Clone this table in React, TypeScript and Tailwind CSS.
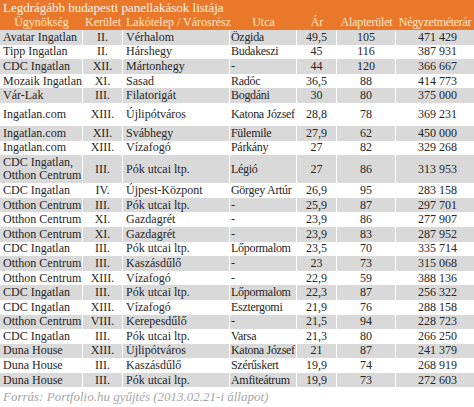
type Row = {
    agency: string[];
    district: string;
    estate: string;
    street: string;
    price: string;
    area: string;
    sqm: string;
    h?: string;
};

const rows: Row[] = [
    { agency: ["Avatar Ingatlan"], district: "II.", estate: "Vérhalom", street: "Özgida", price: "49,5", area: "105", sqm: "471 429" },
    { agency: ["Tipp Ingatlan"], district: "II.", estate: "Hárshegy", street: "Budakeszi", price: "45", area: "116", sqm: "387 931" },
    { agency: ["CDC Ingatlan"], district: "XII.", estate: "Mártonhegy", street: "-", price: "44", area: "120", sqm: "366 667" },
    { agency: ["Mozaik Ingatlan"], district: "XI.", estate: "Sasad", street: "Radóc", price: "36,5", area: "88", sqm: "414 773" },
    { agency: ["Vár-Lak"], district: "III.", estate: "Filatorigát", street: "Bogdáni", price: "30", area: "80", sqm: "375 000" },
    { agency: ["Ingatlan.com"], district: "XIII.", estate: "Újlipótváros", street: "Katona József", price: "28,8", area: "78", sqm: "369 231", h: "h-[23px]" },
    { agency: ["Ingatlan.com"], district: "XII.", estate: "Svábhegy", street: "Fülemile", price: "27,9", area: "62", sqm: "450 000" },
    { agency: ["Ingatlan.com"], district: "XIII.", estate: "Vízafogó", street: "Párkány", price: "27", area: "82", sqm: "329 268" },
    { agency: ["CDC Ingatlan,", "Otthon Centrum"], district: "III.", estate: "Pók utcai ltp.", street: "Légió", price: "27", area: "86", sqm: "313 953", h: "h-[28px]" },
    { agency: ["CDC Ingatlan"], district: "IV.", estate: "Újpest-Központ", street: "Görgey Artúr", price: "26,9", area: "95", sqm: "283 158" },
    { agency: ["Otthon Centrum"], district: "III.", estate: "Pók utcai ltp.", street: "-", price: "25,9", area: "87", sqm: "297 701" },
    { agency: ["Otthon Centrum"], district: "XI.", estate: "Gazdagrét", street: "-", price: "23,9", area: "86", sqm: "277 907" },
    { agency: ["Otthon Centrum"], district: "XI.", estate: "Gazdagrét", street: "-", price: "23,9", area: "83", sqm: "287 952" },
    { agency: ["CDC Ingatlan"], district: "III.", estate: "Pók utcai ltp.", street: "Lőpormalom", price: "23,5", area: "70", sqm: "335 714" },
    { agency: ["Otthon Centrum"], district: "III.", estate: "Kaszásdűlő", street: "-", price: "23", area: "73", sqm: "315 068" },
    { agency: ["Otthon Centrum"], district: "XIII.", estate: "Vízafogó", street: "-", price: "22,9", area: "59", sqm: "388 136" },
    { agency: ["CDC Ingatlan"], district: "III.", estate: "Pók utcai ltp.", street: "Lőpormalom", price: "22,3", area: "87", sqm: "256 322" },
    { agency: ["CDC Ingatlan"], district: "XIII.", estate: "Vízafogó", street: "Esztergomi", price: "21,9", area: "76", sqm: "288 158" },
    { agency: ["Otthon Centrum"], district: "VIII.", estate: "Kerepesdűlő", street: "-", price: "21,5", area: "94", sqm: "228 723" },
    { agency: ["CDC Ingatlan"], district: "III.", estate: "Pók utcai ltp.", street: "Varsa", price: "21,3", area: "80", sqm: "266 250" },
    { agency: ["Duna House"], district: "XIII.", estate: "Újlipótváros", street: "Katona József", price: "21", area: "87", sqm: "241 379" },
    { agency: ["Duna House"], district: "III.", estate: "Kaszásdűlő", street: "Szérűskert", price: "19,9", area: "74", sqm: "268 919" },
    { agency: ["Duna House"], district: "III.", estate: "Pók utcai ltp.", street: "Amfiteátrum", price: "19,9", area: "73", sqm: "272 603" },
];

const cols = "grid grid-cols-[83px_40px_107px_67px_40px_59px_78px]";
const cell = "flex items-center border-r border-white overflow-hidden whitespace-nowrap";
const head = "flex items-center justify-center whitespace-nowrap";

export default function App() {
    return (
        <div className="w-[474px] h-[407px] bg-white text-[#262626] text-[12px] leading-[13px] font-['Liberation_Serif','DejaVu_Serif',serif] overflow-hidden">
            {/* fejléc */}
            <div className="bg-[#e9782a]">
                <div className="h-[15px] flex items-center px-[3px] text-[13px] text-[#fff4ea] whitespace-nowrap">
                    Legdrágább budapesti panellakások listája
                </div>
                <div className={`${cols} h-[15px] text-[#fde7c8] text-[12px]`}>
                    <div className={head}>Ügynökség</div>
                    <div className={head}>Kerület</div>
                    <div className={`${head} !justify-start pl-[3px]`}>Lakótelep / Városrész</div>
                    <div className={head}>Utca</div>
                    <div className={head}>Ár</div>
                    <div className={`${head} tracking-[-0.2px]`}>Alapterület</div>
                    <div className={`${head} tracking-[-0.3px]`}>Négyzetméterár</div>
                </div>
            </div>

            {rows.map((r, i) => (
                <div
                    key={i}
                    className={`${cols} ${r.h ?? "h-[14.6px]"} ${i % 2 === 0 ? "bg-[#d9d9d9]" : "bg-white"}`}
                >
                    <div className={`${cell} pl-[3px]`}>
                        <div className="flex flex-col">
                            {r.agency.map((a) => (
                                <span key={a}>{a}</span>
                            ))}
                        </div>
                    </div>
                    <div className={`${cell} justify-center`}>{r.district}</div>
                    <div className={`${cell} pl-[3px]`}>{r.estate}</div>
                    <div className={`${cell} pl-[1px] tracking-[-0.3px]`}>{r.street}</div>
                    <div className={`${cell} justify-center`}>{r.price}</div>
                    <div className={`${cell} justify-center`}>{r.area}</div>
                    <div className="flex items-center justify-end pr-[17px] whitespace-nowrap">{r.sqm}</div>
                </div>
            ))}

            <div className="h-[19px] flex items-center px-[3px] text-[13px] italic text-[#a6a6a6] whitespace-nowrap">
                Forrás: Portfolio.hu gyűjtés (2013.02.21-i állapot)
            </div>
        </div>
    );
}
